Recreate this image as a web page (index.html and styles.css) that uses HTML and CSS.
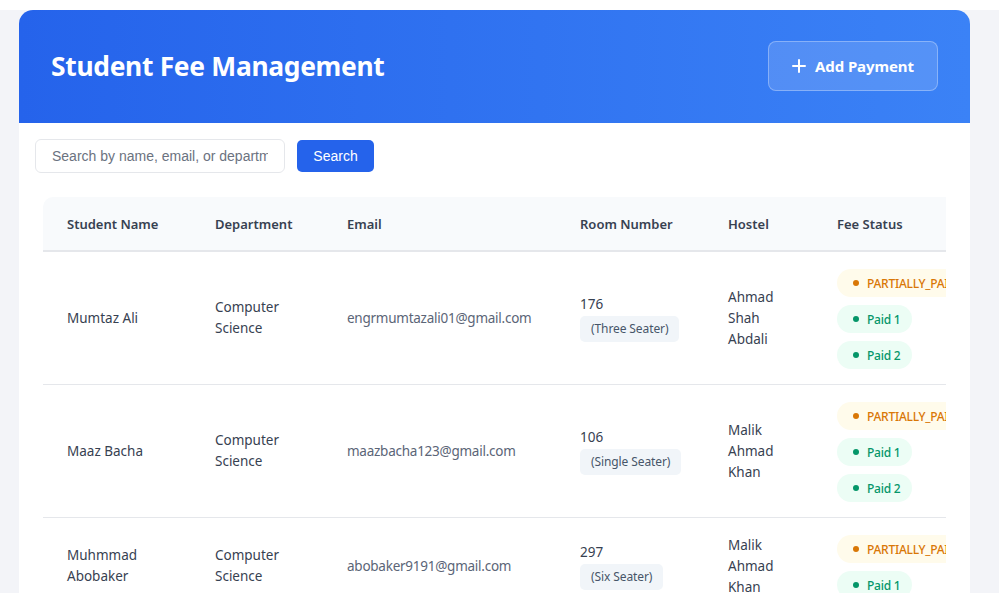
FILE: index.html
```html
<!DOCTYPE html>
<html lang="en">
<head>
<meta charset="utf-8">
<title>Student Fee Management</title>
<link rel="stylesheet" href="styles.css">
</head>
<body>
<div class="page">
  <div class="card">
    <header class="hero">
      <h1 class="title">Student Fee Management</h1>
      <button class="add-btn" type="button">
        <svg class="plus" width="14" height="14" viewBox="0 0 14 14"><path d="M7 1v12M1 7h12" stroke="#fff" stroke-width="2" stroke-linecap="round"/></svg>
        <span>Add Payment</span>
      </button>
    </header>
    <div class="toolbar">
      <input class="search-input" type="text" placeholder="Search by name, email, or department">
      <button class="search-btn" type="button">Search</button>
    </div>
    <div class="table-wrap">
      <table class="fees">
        <colgroup>
          <col class="c-name"><col class="c-dept"><col class="c-email"><col class="c-room"><col class="c-hostel"><col class="c-fee">
        </colgroup>
        <thead>
          <tr>
            <th>Student Name</th><th>Department</th><th>Email</th><th>Room Number</th><th>Hostel</th><th>Fee Status</th>
          </tr>
        </thead>
        <tbody>
          <tr>
            <td>Mumtaz Ali</td>
            <td>Computer Science</td>
            <td class="email">engrmumtazali01@gmail.com</td>
            <td><div class="room">176</div><span class="seat">(Three Seater)</span></td>
            <td class="hostel">Ahmad Shah Abdali</td>
            <td class="fee"><div class="badges"><span class="badge warn"><i class="dot"></i>PARTIALLY_PAID</span><span class="badge ok"><i class="dot"></i>Paid 1</span><span class="badge ok"><i class="dot"></i>Paid 2</span></div></td>
          </tr>
          <tr>
            <td>Maaz Bacha</td>
            <td>Computer Science</td>
            <td class="email">maazbacha123@gmail.com</td>
            <td><div class="room">106</div><span class="seat">(Single Seater)</span></td>
            <td class="hostel">Malik Ahmad Khan</td>
            <td class="fee"><div class="badges"><span class="badge warn"><i class="dot"></i>PARTIALLY_PAID</span><span class="badge ok"><i class="dot"></i>Paid 1</span><span class="badge ok"><i class="dot"></i>Paid 2</span></div></td>
          </tr>
          <tr>
            <td>Muhmmad Abobaker</td>
            <td>Computer Science</td>
            <td class="email">abobaker9191@gmail.com</td>
            <td><div class="room">297</div><span class="seat">(Six Seater)</span></td>
            <td class="hostel">Malik Ahmad Khan</td>
            <td class="fee"><div class="badges"><span class="badge warn"><i class="dot"></i>PARTIALLY_PAID</span><span class="badge ok"><i class="dot"></i>Paid 1</span></div></td>
          </tr>
        </tbody>
      </table>
    </div>
  </div>
</div>
</body>
</html>
```
FILE: styles.css
```css
* { box-sizing: border-box; }
html, body { margin: 0; padding: 0; background: #ffffff; height: 100%; overflow: hidden; }
body { font-family: "Noto Sans", "Open Sans", sans-serif; color: #1f2937; }

.page {
  margin-top: 10px;
  background: #f3f4f8;
  padding: 0 29px 0 19px;
  min-height: 600px;
}

.card {
  background: #ffffff;
  border-radius: 14px 14px 0 0;
  overflow: hidden;
  min-height: 600px;
}

.hero {
  height: 113px;
  background: linear-gradient(90deg, #2563eb 0%, #3b82f6 100%);
  display: flex;
  align-items: center;
  justify-content: space-between;
  padding: 0 32px 0 32px;
}

.title {
  margin: 0;
  color: #ffffff;
  font-size: 26.4px;
  font-weight: 700;
  letter-spacing: -0.3px;
  line-height: 1;
  padding-bottom: 1px;
}

.add-btn {
  display: flex;
  align-items: center;
  gap: 9px;
  height: 50px;
  width: 170px;
  justify-content: center;
  padding-left: 6px;
  background: rgba(255,255,255,0.14);
  border: 1px solid rgba(255,255,255,0.3);
  border-radius: 8px;
  color: #ffffff;
  font-family: "Noto Sans", sans-serif;
  font-size: 15px;
  font-weight: 700;
  letter-spacing: -0.1px;
  margin-bottom: 1px;
}

.toolbar {
  display: flex;
  align-items: center;
  gap: 12px;
  padding: 16px 16px 0 16px;
}

.search-input {
  width: 250px;
  height: 34px;
  border: 1px solid #e5e7eb;
  border-radius: 6px;
  padding: 0 16px;
  font-family: "Liberation Sans", Arial, sans-serif;
  font-size: 14px;
  color: #374151;
  outline: none;
}
.search-input::placeholder { color: #6b7280; }

.search-btn {
  height: 32px;
  width: 77px;
  border: none;
  border-radius: 5px;
  background: #2563eb;
  color: #ffffff;
  font-family: "Liberation Sans", Arial, sans-serif;
  font-size: 14px;
}

.table-wrap {
  margin: 24px 24px 0 24px;
  overflow: hidden;
}

.fees {
  border-collapse: collapse;
  table-layout: fixed;
  width: 1000px;
}

.c-name { width: 148px; }
.c-dept { width: 132px; }
.c-email { width: 233px; }
.c-room { width: 148px; }
.c-hostel { width: 109px; }
.c-fee { width: 230px; }

.fees thead th {
  background: #f8fafc;
  height: 54px;
  text-align: left;
  font-size: 13px;
  font-weight: 600;
  color: #374151;
  padding: 0 24px;
  border-bottom: 2px solid #e5e7eb;
}
.fees thead th:first-child { border-top-left-radius: 10px; }

.fees tbody td {
  padding: 15px 24px 15px 24px;
  font-size: 13.5px;
  line-height: 21px;
  color: #374151;
  vertical-align: middle;
  border-bottom: 1px solid #e5e7eb;
}
.fees tbody td.fee { padding-top: 17px; padding-bottom: 15px; }

.fees td.email { color: #5b6577; letter-spacing: -0.25px; }
.fees td.hostel { padding-right: 40px; }

.room { line-height: 21px; }
.seat {
  display: inline-block;
  margin-top: 1px;
  background: #f1f5f9;
  color: #475569;
  font-size: 12px;
  line-height: 16px;
  padding: 5px 11px;
  border-radius: 5px;
  white-space: nowrap;
  letter-spacing: -0.1px;
}

.badges {
  display: flex;
  flex-direction: column;
  align-items: flex-start;
  gap: 8px;
}

.badge {
  display: inline-flex;
  align-items: center;
  height: 28px;
  padding: 0 12px 0 16px;
  border-radius: 14px;
  font-size: 12px;
  font-weight: 500;
  letter-spacing: -0.25px;
  white-space: nowrap;
}
.badge .dot {
  width: 6px;
  height: 6px;
  border-radius: 50%;
  margin-right: 8px;
  background: currentColor;
}
.badge.warn { background: #fffbeb; color: #d97706; }
.badge.ok { background: #ecfdf5; color: #059669; }
```
